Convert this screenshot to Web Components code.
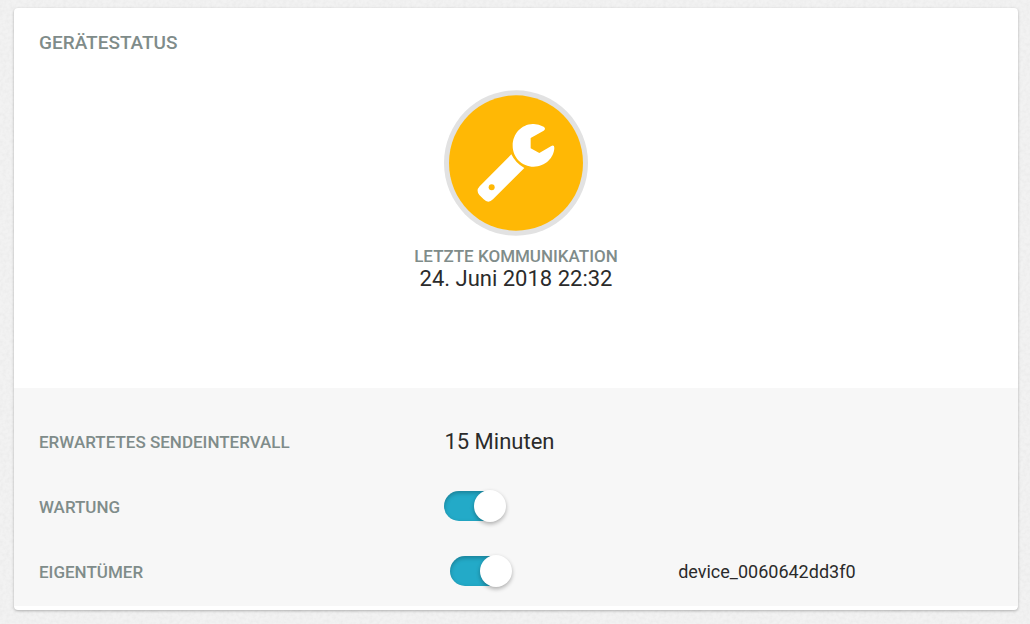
<!DOCTYPE html>
<html lang="de">
<head>
<meta charset="utf-8">
<title>Gerätestatus</title>
<style>
body {
  margin: 0;
  padding: 8px 12px 14px 14px;
  font-family: Roboto, "Liberation Sans", sans-serif;
  color: #2b2b2b;
  background-color: #f2f2f2;
  background-image: url("data:image/svg+xml,%3Csvg xmlns='http://www.w3.org/2000/svg' width='200' height='200'%3E%3Cfilter id='n'%3E%3CfeTurbulence type='fractalNoise' baseFrequency='.3' numOctaves='2' stitchTiles='stitch'/%3E%3CfeColorMatrix values='0 0 0 0 0 0 0 0 0 0 0 0 0 0 0 .05 0 0 0 -.018'/%3E%3C/filter%3E%3Crect width='200' height='200' filter='url(%23n)'/%3E%3C/svg%3E");
}
</style>
</head>
<body>
<device-panel>
  <span slot="title">GERÄTESTATUS</span>
  <device-state slot="state">
    <span slot="label">LETZTE KOMMUNIKATION</span>
    <span slot="time">24. Juni 2018 22:32</span>
  </device-state>
  <detail-row label="ERWARTETES SENDEINTERVALL"><span slot="value">15 Minuten</span></detail-row>
  <detail-row label="WARTUNG"><toggle-switch slot="value" label="Wartung"></toggle-switch></detail-row>
  <detail-row label="EIGENTÜMER"><toggle-switch slot="value" class="inset" label="Eigentümer"></toggle-switch><span slot="extra">device_0060642dd3f0</span></detail-row>
</device-panel>

<script>
const define = (name, html, setup) => {
  const template = document.createElement('template');
  template.innerHTML = html;
  customElements.define(name, class extends HTMLElement {
    constructor() {
      super();
      this.attachShadow({ mode: 'open' }).append(template.content.cloneNode(true));
      if (setup) setup(this, this.shadowRoot);
    }
  });
};

define('device-panel', `
<style>
  :host { display: block; background: #fff; border-radius: 4px; box-shadow: 0 1px 3px rgba(0,0,0,.28); padding-bottom: 4px; }
  h2 { margin: 0; padding: 23px 25px 35px; font-size: 19px; line-height: 24px; font-weight: 500; color: #7f8c8a; }
  .state { padding-bottom: 96px; }
  .details { display: grid; padding: 21px 25px 2px; background: #f7f7f7; }
</style>
<header><h2><slot name="title"></slot></h2></header>
<section class="state"><slot name="state"></slot></section>
<section class="details"><slot></slot></section>`);

define('device-state', `
<style>
  :host { display: flex; flex-direction: column; align-items: center; }
  svg { display: block; width: 144px; height: 146px; margin-bottom: 10px; }
  .label { font-size: 17px; line-height: 20px; font-weight: 500; color: #7f8c8a; }
  .time { font-size: 22px; line-height: 26px; }
</style>
<svg viewBox="42 30 432 438" role="img" aria-label="Wartung">
  <ellipse cx="258" cy="249" rx="216" ry="218" fill="#e2e2e2"/>
  <ellipse cx="258" cy="249" rx="201" ry="203" fill="#ffb805"/>
  <path fill="#fff" d="M302 174L341 152Q349 146 341 140Q325 131 308 132C274 133 248 162 248 197C248 232 276 260 311 260C346 260 372 233 373 204Q373 194 364 198L328 219L302 205Z"/>
  <path fill="#fff" d="M244 223Q256 249 283 264L189 358Q175 372 161 358L148 345Q137 332 149 319Z"/>
  <circle cx="185" cy="322" r="9" fill="#ffb805"/>
</svg>
<div class="label"><slot name="label"></slot></div>
<div class="time"><slot name="time"></slot></div>`);

define('detail-row', `
<style>
  :host { display: grid; grid-template-columns: 42.5% 24.5% 1fr; align-items: center; min-height: 65px; }
  .label { font-size: 17px; line-height: 20px; font-weight: 500; color: #7f8c8a; }
  .value { font-size: 22px; line-height: 24px; }
  .extra { font-size: 18px; line-height: 24px; }
  ::slotted(.inset) { margin-left: 6px; }
</style>
<div class="label"></div>
<div class="value"><slot name="value"></slot></div>
<div class="extra"><slot name="extra"></slot></div>`, (host, root) => {
  root.querySelector('.label').textContent = host.getAttribute('label');
});

define('toggle-switch', `
<style>
  :host { display: block; width: 62px; height: 32px; }
  input { appearance: none; display: flex; align-items: center; width: 58px; height: 30px; margin: 0; border-radius: 15px; background: #bbb; box-shadow: inset 0 2px 4px rgba(0,0,0,.25); cursor: pointer; }
  input::before { content: ""; flex: none; width: 32px; height: 32px; border-radius: 50%; background: #fff; box-shadow: 0 2px 4px rgba(0,0,0,.3); }
  input:checked { background: #23aac8; }
  input:checked::before { margin-left: 30px; }
</style>
<input type="checkbox" role="switch" checked>`, (host, root) => {
  root.querySelector('input').setAttribute('aria-label', host.getAttribute('label'));
});
</script>
</body>
</html>
